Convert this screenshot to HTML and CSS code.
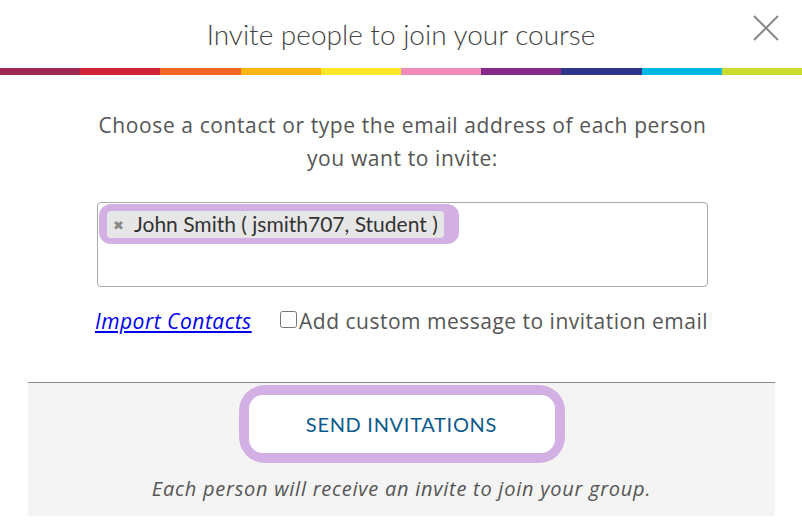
FILE: index.html
```html
<!DOCTYPE html>
<html lang="en">
<head>
    <meta charset="UTF-8">
    <title>Invite people</title>
    <link rel="stylesheet" href="styles.css">
</head>
<body>
    <div class="modal">
        <div class="modal-header">
            <h1 class="modal-title">Invite people to join your course</h1>
            <button class="close-btn" aria-label="Close">
                <svg width="26" height="26" viewBox="0 0 26 26">
                    <path d="M1 1 L25 25 M25 1 L1 25" stroke="#8a8a8a" stroke-width="2" fill="none"/>
                </svg>
            </button>
        </div>
        <div class="rainbow">
            <span class="c1"></span><span class="c2"></span><span class="c3"></span><span class="c4"></span><span class="c5"></span>
            <span class="c6"></span><span class="c7"></span><span class="c8"></span><span class="c9"></span><span class="c10"></span>
        </div>

        <div class="modal-body">
            <p class="intro">Choose a contact or type the email address of each person<br>you want to invite:</p>

            <div class="recipients">
                <span class="token-ring">
                    <span class="token"><span class="token-x">&#10006;</span>John Smith ( jsmith707, Student )</span>
                </span>
            </div>

            <div class="options">
                <a href="#" class="import-link">Import Contacts</a>
                <label class="custom-msg"><input type="checkbox">Add custom message to invitation email</label>
            </div>
        </div>

        <div class="modal-footer">
            <div class="send-ring">
                <button class="send-btn">SEND INVITATIONS</button>
            </div>
            <p class="footer-note">Each person will receive an invite to join your group.</p>
        </div>
    </div>
</body>
</html>
```

FILE: styles.css
```css
body {
    margin: 0;
    background-color: #ffffff;
    font-family: "Open Sans", Lato, sans-serif;
    color: #555555;
}

.modal-header {
    position: relative;
    height: 68px;
    display: flex;
    justify-content: center;
    align-items: center;
}

.modal-title {
    margin: 0;
    font-family: Lato, sans-serif;
    font-size: 28px;
    font-weight: 300;
    color: #444444;
}

.close-btn {
    position: absolute;
    top: 15px;
    right: 23px;
    padding: 0;
    background: none;
    border: none;
    cursor: pointer;
}

.rainbow {
    display: flex;
    height: 7px;
}

.rainbow span {
    flex: 1;
}

.c1 { background-color: #9c2a55; }
.c2 { background-color: #cf2338; }
.c3 { background-color: #ef6723; }
.c4 { background-color: #fbb515; }
.c5 { background-color: #fde72b; }
.c6 { background-color: #ef8bba; }
.c7 { background-color: #852b87; }
.c8 { background-color: #2e358b; }
.c9 { background-color: #00b8e3; }
.c10 { background-color: #cddb2f; }

.modal-body {
    padding: 34px 94px 0 97px;
    text-align: center;
}

.intro {
    margin: 0 0 27px;
    font-size: 21px;
    line-height: 33px;
    letter-spacing: 0.6px;
}

.recipients {
    height: 85px;
    box-sizing: border-box;
    border: 1px solid #aaaaaa;
    border-radius: 4px;
    padding: 1px;
    text-align: left;
}

.token-ring {
    display: inline-block;
    padding: 7px 15px 6px 8px;
    background-color: #d3b0e3;
    border-radius: 12px;
}

.token {
    display: inline-block;
    padding: 0 6px 0 6px;
    background-color: #e6e6e6;
    border-radius: 4px;
    font-family: Lato, sans-serif;
    font-size: 21px;
    line-height: 26px;
    color: #333333;
}

.token-x {
    margin-right: 10px;
    font-size: 13px;
    color: #888888;
    vertical-align: 2px;
}

.options {
    display: flex;
    justify-content: space-between;
    align-items: center;
    margin: 20px 0 0 -2px;
    font-size: 21px;
    letter-spacing: 0.5px;
}

.import-link {
    color: #0000ee;
    font-style: italic;
}

.custom-msg input {
    margin: 0 2px 0 0;
    width: 17px;
    height: 17px;
    vertical-align: 1px;
}

.modal-footer {
    margin: 47px 27px 0 28px;
    padding: 2px 0 14px;
    border-top: 1px solid #888888;
    background-color: #f4f4f4;
    text-align: center;
}

.send-ring {
    display: inline-block;
    padding: 10px;
    background-color: #d3b0e3;
    border-radius: 26px;
}

.send-btn {
    display: block;
    width: 306px;
    height: 58px;
    border: none;
    border-radius: 14px;
    background-color: #ffffff;
    color: #0b5a8c;
    font-family: Lato, sans-serif;
    font-size: 20px;
    letter-spacing: 0.7px;
    cursor: pointer;
}

.footer-note {
    margin: 12px 0 0;
    font-size: 20px;
    font-style: italic;
    letter-spacing: 0.75px;
}
```
